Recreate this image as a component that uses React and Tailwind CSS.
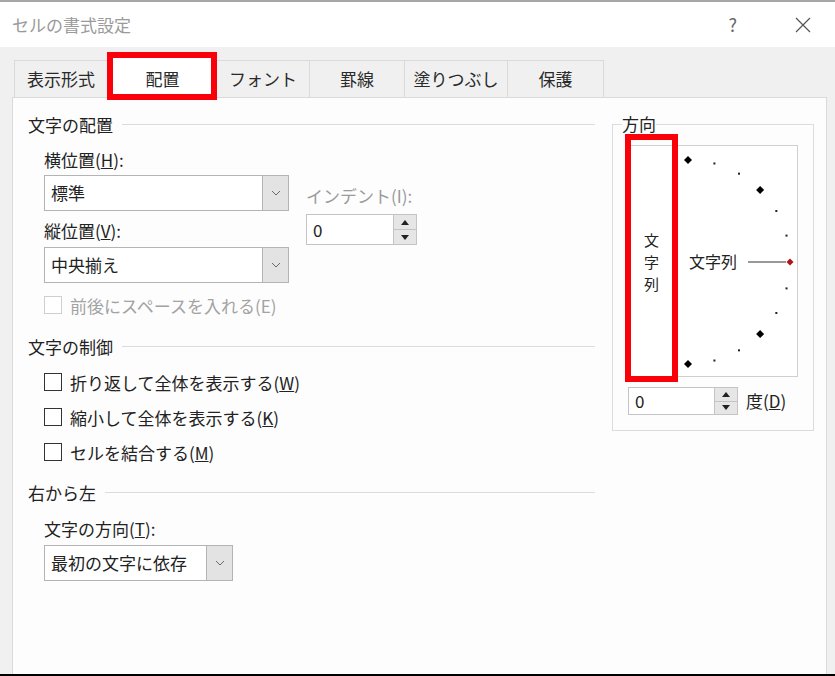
const font = "font-['Noto_Sans_CJK_JP','Noto_Sans',sans-serif]";

function Chevron() {
  return (
    <svg width="10" height="6" viewBox="0 0 10 6">
      <polyline points="1,1 5,5 9,1" fill="none" stroke="#6b6b6b" strokeWidth="1" />
    </svg>
  );
}

function Select({ value, width }) {
  return (
    <div className={`flex h-[36px] border border-[#b4b4b4] bg-white ${width}`}>
      <div className="flex-1 flex items-center pl-[6px] text-[17px] text-[#222]">{value}</div>
      <div className="w-[26px] border-l border-[#b4b4b4] bg-[#e3e3e3] flex items-center justify-center">
        <Chevron />
      </div>
    </div>
  );
}

function Spin({ value, width, height }) {
  return (
    <div className={`flex border border-[#c4c4c4] bg-white ${width} ${height}`}>
      <div className="flex-1 flex items-center pl-[6px] text-[17px] text-[#222]">{value}</div>
      <div className="w-[23px] flex flex-col border-l border-[#c4c4c4]">
        <div className="flex-1 bg-[#e6e6e6] border-b border-[#c4c4c4] flex items-center justify-center">
          <svg width="8" height="5" viewBox="0 0 8 5"><polygon points="0,5 8,5 4,0" fill="#222" /></svg>
        </div>
        <div className="flex-1 bg-[#e6e6e6] flex items-center justify-center">
          <svg width="8" height="5" viewBox="0 0 8 5"><polygon points="0,0 8,0 4,5" fill="#222" /></svg>
        </div>
      </div>
    </div>
  );
}

function Heading({ children }) {
  return (
    <div className="flex items-center h-[24px]">
      <span className="text-[17px] text-[#222] leading-none">{children}</span>
      <div className="flex-1 h-px bg-[#dcdcdc] ml-[9px]" />
    </div>
  );
}

function Check({ children, disabled, className = "" }) {
  return (
    <div className={`flex items-center h-[24px] ml-[16px] ${className}`}>
      <div className={`w-[18px] h-[18px] bg-white border ${disabled ? "border-[#cfcfcf]" : "border-[#333]"}`} />
      <span className={`ml-[8px] text-[17px] leading-none ${disabled ? "text-[#a3a3a3]" : "text-[#222]"}`}>{children}</span>
    </div>
  );
}

function Dial() {
  const cx = 11;
  const cy = 116;
  const r = 102;
  const dots = [];
  for (let a = -90; a <= 90; a += 15) {
    const rad = (a * Math.PI) / 180;
    const x = cx + r * Math.cos(rad);
    const y = cy - r * Math.sin(rad);
    const big = Math.abs(a) === 90 || Math.abs(a) === 45;
    if (a === 0) {
      dots.push(<polygon key={a} points={`${x},${y - 3.5} ${x + 3.5},${y} ${x},${y + 3.5} ${x - 3.5},${y}`} fill="#b01515" />);
    } else if (big) {
      dots.push(<polygon key={a} points={`${x},${y - 4} ${x + 4},${y} ${x},${y + 4} ${x - 4},${y}`} fill="#000" />);
    } else {
      dots.push(<rect key={a} x={x - 1} y={y - 1} width="2" height="2" fill="#222" />);
    }
  }
  return (
    <svg width="120" height="230" viewBox="0 0 120 230">
      {dots}
      <text x="12" y="122" fontSize="16" fill="#222" fontFamily="Noto Sans CJK JP, sans-serif">文字列</text>
      <line x1="71" y1="116" x2="109" y2="116" stroke="#333" strokeWidth="1" />
    </svg>
  );
}

export default function App() {
  return (
    <div className={`w-[835px] h-[676px] overflow-hidden flex flex-col ${font}`}>
      {/* title bar */}
      <div className="h-[47px] shrink-0 bg-white border-t-2 border-[#a6a6a6] flex items-center pl-[12px]">
        <span className="text-[17px] text-[#9a9a9a]">セルの書式設定</span>
        <span className="ml-auto text-[18px] text-[#666] mr-[58px]">?</span>
        <svg width="16" height="16" viewBox="0 0 16 16" className="mr-[24px]">
          <path d="M1 1 L15 15 M15 1 L1 15" stroke="#555" strokeWidth="1.2" />
        </svg>
      </div>

      <div className="flex-1 bg-[#f0f0f0] flex flex-col pt-[13px]">
        {/* tabs */}
        <div className="flex h-[37px] pl-[14px] items-end shrink-0">
          <div className="w-[94px] h-[37px] border border-b-0 border-[#dadada] flex items-center justify-center text-[17px] text-[#2a2a2a]">表示形式</div>
          <div className="relative w-[109px] h-[41px] bg-white flex items-center justify-center text-[17px] text-[#2a2a2a] pt-[4px]">
            配置
            <span className="absolute -left-[1px] right-0 -top-[4px] -bottom-[3px] border-[6px] border-[#fa0008]" />
          </div>
          <div className="w-[93px] h-[37px] border border-l-0 border-b-0 border-[#dadada] flex items-center justify-center text-[17px] text-[#2a2a2a]">フォント</div>
          <div className="w-[95px] h-[37px] border border-l-0 border-b-0 border-[#dadada] flex items-center justify-center text-[17px] text-[#2a2a2a]">罫線</div>
          <div className="w-[103px] h-[37px] border border-l-0 border-b-0 border-[#dadada] flex items-center justify-center text-[17px] text-[#2a2a2a]">塗りつぶし</div>
          <div className="w-[96px] h-[37px] border border-l-0 border-b-0 border-[#dadada] flex items-center justify-center text-[17px] text-[#2a2a2a]">保護</div>
        </div>

        {/* panel */}
        <div className="flex-1 ml-[12px] mr-[8px] bg-[#fdfdfd] border border-b-0 border-[#dadada] flex pl-[15px] pt-[14px]">
          <div className="w-[567px] flex flex-col">
            <Heading>文字の配置</Heading>
            <div className="flex mt-[12px]">
              <div className="flex flex-col ml-[16px]">
                <div className="h-[24px] flex items-center text-[17px] text-[#222]">横位置(<u>H</u>):</div>
                <div className="mt-[3px]"><Select value="標準" width="w-[245px]" /></div>
                <div className="h-[24px] mt-[8px] flex items-center text-[17px] text-[#222]">縦位置(<u>V</u>):</div>
                <div className="mt-[4px]"><Select value="中央揃え" width="w-[245px]" /></div>
              </div>
              <div className="flex flex-col ml-[17px] pt-[36px]">
                <div className="h-[24px] flex items-center text-[17px] text-[#9a9a9a]">インデント(I):</div>
                <div className="mt-[6px]"><Spin value="0" width="w-[111px]" height="h-[31px]" /></div>
              </div>
            </div>
            <Check disabled className="mt-[10px]">前後にスペースを入れる(E)</Check>

            <div className="mt-[17px]"><Heading>文字の制御</Heading></div>
            <Check className="mt-[12px]">折り返して全体を表示する(<u>W</u>)</Check>
            <Check className="mt-[11px]">縮小して全体を表示する(<u>K</u>)</Check>
            <Check className="mt-[11px]">セルを結合する(<u>M</u>)</Check>

            <div className="mt-[16px]"><Heading>右から左</Heading></div>
            <div className="h-[24px] mt-[13px] ml-[16px] flex items-center text-[17px] text-[#222]">文字の方向(<u>T</u>):</div>
            <div className="mt-[4px] ml-[16px]"><Select value="最初の文字に依存" width="w-[189px]" /></div>
          </div>

          {/* orientation group */}
          <div className="ml-[17px] w-[200px] self-start">
            <fieldset className="border border-[#dcdcdc] px-[15px] pb-[15px]">
              <legend className="-ml-[6px] text-[17px] text-[#222] leading-[24px]">方向</legend>
              <div className="relative mt-[9px] flex h-[232px] border border-[#cfcfcf] bg-white">
                <div className="w-[48px] flex flex-col items-center justify-center text-[15px] text-[#222] leading-[22px] pr-[3px] pt-[2px]">
                  <span>文</span>
                  <span>字</span>
                  <span>列</span>
                </div>
                <Dial />
                <span className="absolute -left-[4px] -top-[12px] w-[53px] h-[248px] border-[6px] border-[#fa0008]" />
              </div>
              <div className="flex items-center mt-[10px]">
                <Spin value="0" width="w-[110px]" height="h-[28px]" />
                <span className="ml-[8px] text-[17px] text-[#222]">度(<u>D</u>)</span>
              </div>
            </fieldset>
          </div>
        </div>
        <div className="h-[2px] bg-black shrink-0" />
      </div>
    </div>
  );
}
